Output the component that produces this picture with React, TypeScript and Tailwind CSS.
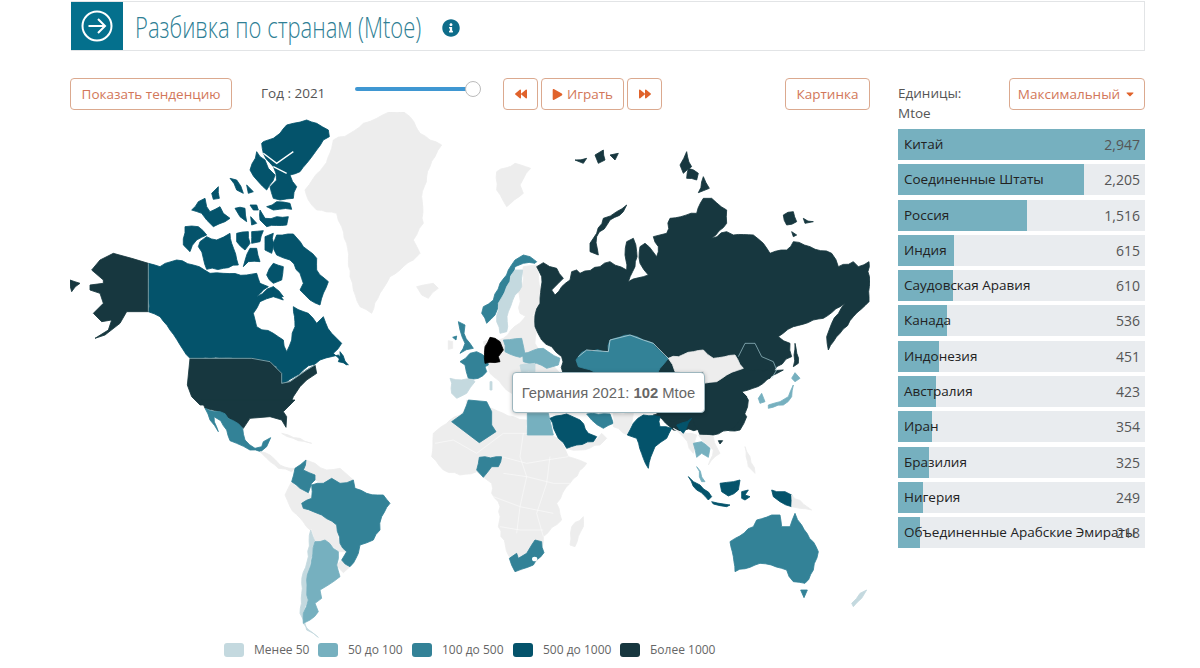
import React from "react";
import { FaBackward, FaForward, FaPlay, FaInfoCircle, FaCaretDown } from "react-icons/fa";

const DARK = "#17373f";
const D500 = "#04536b";
const D100 = "#338297";
const D50 = "#76b0bf";
const LOW = "#c4d9df";
const NONE = "#ededed";

type Shape = [string, string, boolean?];

// adds small deterministic coast detail to the long straight edges of a drawn outline
let seed = 12345;
const rnd = () => {
  seed = (seed * 1103515245 + 12345) & 0x7fffffff;
  return seed / 0x7fffffff;
};
const rough = (s: string, amp = 3.5, seg = 15) => {
  const p = s.split(" ").map((q) => q.split(",").map(Number));
  const out: string[] = [];
  p.forEach((a, i) => {
    const b = p[(i + 1) % p.length];
    out.push(`${a[0]},${a[1]}`);
    const dx = b[0] - a[0];
    const dy = b[1] - a[1];
    const len = Math.hypot(dx, dy);
    const n = Math.floor(len / seg);
    for (let k = 1; k < n; k++) {
      const t = k / n;
      const o = (rnd() - 0.5) * 2 * amp;
      out.push(`${(a[0] + dx * t - (dy / len) * o).toFixed(1)},${(a[1] + dy * t + (dx / len) * o).toFixed(1)}`);
    }
  });
  return out.join(" ");
};

const P = ({ c, pts, straight }: { c: string; pts: string; straight?: boolean }) => {
  const d = React.useMemo(() => (straight ? pts : rough(pts)), [pts, straight]);
  return <polygon points={d} fill={c} stroke={c} strokeWidth={2.5} strokeLinejoin="round" />;
};

// coordinates read from 3x crops; each group maps its crop back on to the page
const z5: Shape[] = [
  [NONE, "735,240 760,205 790,170 815,115 820,90 870,70 910,40 950,25 990,5 1030,5 1050,20 1080,70 1110,90 1145,105 1125,140 1110,170 1100,200 1085,260 1090,340 1060,390 1080,430 1060,450 1030,470 990,500 960,550 935,610 900,590 880,540 870,500 860,400 845,350 830,310 770,300 745,270"],
  [NONE, "1070,530 1120,520 1135,535 1105,565 1085,555"],
  [D500, "265,460 300,470 350,450 400,465 450,490 490,490 560,495 590,490 600,520 625,530 590,560 640,530 670,570 640,560 600,575 580,610 590,650 640,670 670,690 680,725 695,690 705,650 700,590 745,610 770,640 790,620 815,670 845,700 820,730 860,765 835,735 780,750 730,780 680,815 660,820 650,770 575,745 390,745 370,720 330,660 300,620 265,605"],
  [D500, "650,375 700,372 730,410 770,445 770,480 805,515 780,585 750,570 720,540 730,520 720,490 690,450 650,435 640,400"],
  [D500, "640,460 670,470 665,510 640,520 620,495"],
  [D500, "640,530 670,560 640,555"],
  [D500, "420,395 440,380 470,390 510,370 515,400 535,465 490,475 440,478 430,445 415,410"],
  [D500, "375,350 415,350 440,375 410,390 390,425 370,405"],
  [D500, "530,370 565,365 570,400 555,420 530,395"],
  [D500, "575,365 610,362 600,395 575,400"],
  [D500, "570,415 590,415 600,455 565,455 550,470"],
  [D500, "615,380 640,370 635,430 615,420"],
  [D500, "610,95 640,85 660,70 680,45 700,40 740,30 770,40 805,60 808,80 790,90 770,120 740,160 720,185 690,195 710,230 700,265 660,270 640,265 630,230 650,210 640,170 610,130 605,100"],
  [D500, "570,180 590,125 615,150 625,175 645,195 620,240 595,215"],
  [D500, "620,290 650,275 690,280 695,298 640,300"],
  [D500, "600,300 615,325 650,320 685,320 680,345 620,350 600,330"],
  [D500, "395,300 415,275 435,265 440,290 450,305 480,290 490,310 510,325 495,335 460,350 440,330 425,310"],
  [D500, "510,205 530,210 550,250 530,240"],
  [D500, "560,225 580,245 565,250"],
  [D500, "455,250 475,230 478,265 460,268"],
  [D500, "570,285 590,285 595,300 580,300"],
  [D500, "525,295 555,295 560,335 540,320"],
  [D500, "572,320 590,340 575,345"],
  [D500, "840,725 865,765 835,755"],
  [DARK, "265,460 215,445 160,430 120,450 95,480 130,510 130,520 90,525 90,540 120,550 130,580 100,610 125,635 155,630 145,660 105,685 135,675 180,640 200,605 265,605", true],
  [DARK, "30,510 60,520 35,545"],
  [DARK, "390,745 575,745 630,755 665,790 665,820 690,815 740,780 765,765 770,790 740,810 720,830 700,860 690,885 420,885 395,860 382,825", true],
];

const z7: Shape[] = [
  [DARK, "5,0 15,25 60,35 100,65 130,85 150,55 210,50 245,60 258,82 260,50 250,35 285,0", true],
  [D100, "15,25 60,35 100,62 128,85 135,120 165,145 185,140 190,125 212,113 200,140 182,155 150,150 110,130 90,122 80,90 62,62 42,50 55,95 30,60"],
  [NONE, "180,155 210,165 240,195 270,205 285,205 275,215 235,205 200,175"],
  [NONE, "245,100 300,115 335,130 295,122"],
  [NONE, "318,180 345,190 380,210 420,205 460,240 420,250 395,235 370,250 345,240 345,225 310,210"],
  [NONE, "275,245 300,265 325,278 335,295 305,310 310,325 340,335 365,345 330,390 270,320 255,285"],
  [NONE, "340,335 365,345 410,375 420,430 440,455 415,455 375,420 345,425 335,390"],
  [NONE, "425,480 450,500 430,518 410,495"],
  [D100, "318,180 285,205 275,245 300,265 325,278 335,250 345,240 345,225 310,210"],
  [D100, "335,255 370,250 395,235 420,250 460,240 465,265 500,280 550,285 570,310 545,350 540,390 520,420 480,435 475,460 450,500 425,480 440,455 420,430 410,375 365,345 340,335 310,325 305,310 335,295"],
  [LOW, "332,390 345,425 330,490 320,540 325,600 310,640 310,670 340,700 355,712 320,690 300,640 305,550 325,470"],
  [D50, "345,425 375,420 415,455 410,495 420,530 385,555 360,570 365,595 345,610 355,635 330,660 310,670 310,640 325,600 320,540 335,480"],
];

const z10: Shape[] = [
  [NONE, "90,60 40,100 35,170 70,210 120,225 170,215 215,250 215,280 240,320 235,380 265,465 285,515 340,495 370,455 370,410 425,360 410,310 450,250 500,190 445,170 420,120 395,105 320,100 320,60 280,50 250,40 215,25 140,0 130,35"],
  [NONE, "490,350 490,380 465,440 450,435 455,380"],
  [NONE, "440,145 470,135 520,125 545,100 560,115 540,135 480,150"],
  [D100, "145,0 200,5 215,35 215,75 228,95 178,128 95,65 130,40 140,15", true],
  [D100, "178,172 245,170 235,200 215,200 190,232 170,210"],
  [D100, "345,420 365,425 372,458 340,495 285,515 268,475 290,460 295,475 320,460 335,435"],
  [D50, "322,40 385,40 400,105 322,105", true],
  [D500, "390,55 440,42 480,60 505,100 530,110 520,125 470,135 440,145 415,115"],
  [D100, "500,42 570,42 580,70 550,85 515,60"],
];

const z9Back: Shape[] = [
  [NONE, "130,275 190,265 260,195 300,200 285,280 330,340 360,370 250,440 215,430 150,370 140,340"],
  [NONE, "250,50 290,45 295,70 305,170 270,205 240,190 235,120 248,100"],
  [NONE, "25,272 38,275 38,295 25,298"],
];

const z6: Shape[] = [
  [NONE, "170,125 225,100 272,115 240,165 250,190 200,230 170,180"],
  [DARK, "560,225 530,245 490,265 470,310 450,340 450,365 475,375 470,320 510,270 550,245"],
  [DARK, "405,90 440,85 430,100"],
  [DARK, "465,75 490,60 495,90 475,100"],
  [DARK, "510,75 535,70 525,90"],
  [DARK, "740,65 755,110 730,130 720,105"],
  [DARK, "745,115 775,130 770,150 740,145"],
  [DARK, "790,140 808,175 775,188"],
  [DARK, "1030,255 1060,245 1070,275 1040,285"],
  [DARK, "1090,265 1120,275 1095,280"],
  [DARK, "1055,305 1070,315 1060,320"],
  [DARK, "1065,640 1075,700 1060,710"],
  [DARK, "290,410 310,398 350,415 370,445 355,460 335,480 345,495 365,470 390,450 395,425 410,420 420,430 480,410 510,395 560,420 555,375 560,335 580,325 590,365 585,410 565,455 610,440 625,435 600,400 600,350 615,340 650,380 655,350 640,320 680,310 690,265 770,250 790,205 815,205 860,240 860,280 815,325 860,305 880,315 940,315 970,340 990,370 1040,360 1060,335 1110,350 1175,370 1195,410 1240,395 1255,410 1287,395 1287,515 1240,560 1200,610 1165,660 1160,620 1175,580 1215,520 1150,565 1060,590 1015,620 1050,640 1055,680 1010,710 990,745 925,770 900,780 920,800 905,830 920,860 900,900 700,900 600,800 370,760 365,680 335,650 305,630 285,590 285,555 300,520 305,440"],
  [D100, "415,680 440,660 505,665 510,630 570,615 610,630 640,640 685,685 660,715 650,735 500,735 415,710 408,690"],
];

const z9: Shape[] = [
  [D100, "290,35 270,20 250,15 225,30 205,60 180,100 160,150 130,170 125,190 140,220 165,195 175,160 200,110 225,50 250,40 285,40"],
  [LOW, "248,60 245,110 225,135 205,185 200,245 180,250 170,215 175,160 200,110 225,60"],
  [D100, "55,215 75,225 72,250 90,280 100,295 60,310 75,280 60,240"],
  [D100, "38,262 50,258 48,270"],
  [D100, "90,310 110,305 140,325 145,345 135,350 140,365 115,385 85,385 75,345 60,335"],
  ["#000000", "150,262 165,265 180,275 190,300 175,320 180,335 135,340 135,290"],
  [D50, "190,270 245,265 255,315 240,322 195,305"],
  [D50, "248,310 310,295 360,325 355,345 320,355 290,340 250,335"],
  [LOW, "240,345 285,340 285,365 245,370"],
  [LOW, "30,385 100,390 105,395 80,430 50,445 35,430"],
  [LOW, "150,395 156,395 156,420 150,420"],
];

const z8: Shape[] = [
  [NONE, "340,130 400,130 382,195 340,170"],
  [DARK, "480,130 470,80 480,0 850,0 810,20 790,40 725,65 745,90 735,130 700,175 640,195 600,195 580,150 575,140 540,145 520,155 460,135"],
  [NONE, "520,175 560,190 590,195 580,250 550,200"],
  [NONE, "595,195 640,200 660,250 625,285 640,240 610,215"],
  [NONE, "735,230 750,260 765,310 745,290"],
  [D500, "390,180 400,160 430,135 480,140 480,170 515,175 500,205 465,230 445,295 430,265 410,205 382,195"],
  [D500, "530,165 575,145 550,190"],
  [DARK, "655,212 668,212 660,222"],
  [D50, "580,220 605,215 630,235 625,262 605,250 590,262"],
  [D50, "590,290 615,335 605,335"],
  [D500, "565,320 600,345 635,380 625,390 590,360"],
  [D500, "635,395 690,405 680,410 640,402"],
  [D500, "660,340 700,335 720,330 715,360 685,378 665,365"],
  [D500, "725,365 745,360 735,375 750,380 735,390 725,385"],
  [D500, "815,360 830,365 855,365 875,375 875,410 840,395 820,380"],
  [NONE, "875,375 935,420 900,415 875,410"],
  [D100, "690,515 760,470 770,450 815,435 840,435 845,470 870,470 885,430 905,465 955,545 940,600 915,640 880,635 860,600 845,595 780,580 705,605 700,560"],
  [D100, "902,660 922,660 912,683"],
  [LOW, "1100,660 1085,685 1060,710 1055,700 1080,670"],
  [D50, "880,45 865,80 840,95 805,105 805,115 850,105 875,80"],
  [D50, "875,25 885,8 900,25 885,35"],
  [D50, "785,70 795,95 780,100 775,85"],
];

const z11: Shape[] = [
  [NONE, "25,115 100,95 130,90 160,115 225,105 250,145 200,165 170,185 130,190 130,155 45,155"],
];

const Group = ({ x, y, shapes, children }: { x: number; y: number; shapes: Shape[]; children?: React.ReactNode }) => (
  <g transform={`translate(${x} ${y}) scale(${1 / 3})`}>
    {shapes.map(([c, pts, straight], i) => (
      <P key={i} c={c} pts={pts} straight={straight} />
    ))}
    {children}
  </g>
);

const WorldMap = () => (
  <svg viewBox="70 112 800 528" className="block w-[800px] h-[528px]">
    <Group x={60} y={110} shapes={z5}>
      <polyline points="610,130 650,160 700,125" fill="none" stroke="#fff" strokeWidth={4} />
      <polyline points="640,170 680,190" fill="none" stroke="#fff" strokeWidth={4} />
      <polyline points="265,460 265,605" fill="none" stroke="#a6cdd6" strokeWidth={2} />
      <polyline points="390,745 575,745 630,755 665,790 665,820 690,815 740,780 765,765" fill="none" stroke="#a6cdd6" strokeWidth={2} />
    </Group>
    <Group x={440} y={250} shapes={z9Back} />
    <Group x={440} y={130} shapes={z6}>
      <polyline points="415,680 440,660 505,665 510,630 570,615 610,630 640,640 685,685" fill="none" stroke="#d6e6ea" strokeWidth={2} />
    </Group>
    <Group x={440} y={250} shapes={z9} />
    <Group x={200} y={400} shapes={z7} />
    <Group x={420} y={400} shapes={z10}>
      <g fill="none" stroke="#fff" strokeWidth={1.5}>
        <polyline points="45,130 100,120 170,160 250,100 320,100" />
        <polyline points="245,170 320,190 380,180 445,170" />
        <polyline points="250,220 320,230 400,250 450,250" />
        <polyline points="220,290 300,320 400,340" />
        <polyline points="240,380 300,390 370,390" />
        <polyline points="310,100 300,170 320,230 300,320 290,400" />
        <polyline points="390,170 380,250 350,340 370,410" />
      </g>
      <ellipse cx={344} cy={477} rx={8} ry={7} fill="#fff" />
    </Group>
    <Group x={500} y={370} shapes={z8} />
    <Group x={660} y={320} shapes={z11}>
      <polyline points="235,110 255,70 285,70 305,110 340,125 350,150 335,175" fill="none" stroke="#a6cdd6" strokeWidth={2} />
    </Group>
  </svg>
);

const bars: [string, string, number][] = [
  ["Китай", "2,947", 247],
  ["Соединенные Штаты", "2,205", 186],
  ["Россия", "1,516", 129],
  ["Индия", "615", 56],
  ["Саудовская Аравия", "610", 55],
  ["Канада", "536", 49],
  ["Индонезия", "451", 41],
  ["Австралия", "423", 38],
  ["Иран", "354", 34],
  ["Бразилия", "325", 31],
  ["Нигерия", "249", 25],
  ["Объединенные Арабские Эмираты", "218", 22],
];

const legend: [string, string, string][] = [
  ["bg-[#c4d9df]", "Менее 50", "w-[55px]"],
  ["bg-[#76b0bf]", "50 до 100", "w-[55px]"],
  ["bg-[#338297]", "100 до 500", "w-[62px]"],
  ["bg-[#04536b]", "500 до 1000", "w-[68px]"],
  ["bg-[#17373f]", "Более 1000", "w-[66px]"],
];

const btn =
  "h-[32px] flex items-center justify-center rounded-[4px] border border-[#dba98f] bg-white text-[13.5px] text-[#d2775a]";

export default function App() {
  return (
    <div className="relative w-[1200px] h-[668px] overflow-hidden bg-white font-['Open_Sans',sans-serif]">
      <header className="ml-[71px] mt-px w-[1074px] h-[50px] flex items-center border border-l-0 border-[#e2e4e6]">
        <div className="w-[52px] h-[48px] flex items-center justify-center bg-[#04708d]">
          <svg width="32" height="32" viewBox="0 0 32 32" fill="none" stroke="#fff" strokeWidth="2">
            <circle cx="16" cy="16" r="14.5" />
            <path d="M7.5 16H24M17 9l7 7-7 7" />
          </svg>
        </div>
        <h1 className="ml-[12px] mt-[1px] text-[30px] leading-none font-light text-[#2f7f95] whitespace-nowrap origin-left scale-x-[0.734] w-[288px]">
          Разбивка по странам (Mtoe)
        </h1>
        <FaInfoCircle className="ml-[19px] mt-[3px] text-[#0e6d8a]" size={18} />
      </header>

      <div className="flex mt-[27px] ml-[70px]">
        <main className="w-[800px] shrink-0">
          <div className="h-[34px] flex">
            <button className={`${btn} w-[162px]`}>Показать тенденцию</button>
            <span className="ml-[29px] w-[94px] mt-[5px] text-[13.5px] leading-5 text-[#555]">Год : 2021</span>
            <div className="relative w-[119px] h-[4px] mt-[9px] rounded-full bg-[#3f97d2]">
              <span className="absolute -right-[7px] -top-[6px] w-[16px] h-[16px] rounded-full bg-white border border-[#bbb]" />
            </div>
            <div className="ml-[29px] flex gap-[3px]">
              <button className={`${btn} w-[35px] text-[#e0622b]`}><FaBackward size={12} /></button>
              <button className={`${btn} w-[83px] gap-[4px]`}><FaPlay size={11} className="text-[#e0622b]" />Играть</button>
              <button className={`${btn} w-[35px] text-[#e0622b]`}><FaForward size={12} /></button>
            </div>
            <button className={`${btn} ml-[123px] w-[85px]`}>Картинка</button>
          </div>
          <WorldMap />
          <div className="h-[20px] ml-[154px] flex items-center gap-[9px] text-[12px] text-[#666]">
            {legend.map(([c, t, w]) => (
              <div key={t} className="flex items-center gap-[10px]">
                <span className={`w-[20px] h-[14px] rounded-[3px] ${c}`} />
                <span className={`${w} whitespace-nowrap`}>{t}</span>
              </div>
            ))}
          </div>
        </main>

        <aside className="ml-[28px] w-[247px]">
          <div className="flex justify-between h-[51px]">
            <div className="pt-[5px] text-[13.5px] leading-[20px] text-[#555]">
              Единицы:
              <br />
              Mtoe
            </div>
            <button className={`${btn} w-[136px] gap-[4px]`}>Максимальный<FaCaretDown size={12} className="text-[#e0622b]" /></button>
          </div>
          <div className="flex flex-col gap-[4.3px]">
            {bars.map(([name, val, w]) => (
              <div key={name} className="relative h-[31px] bg-[#e9ecef] text-[13.5px] leading-[31px]">
                <div className="absolute left-0 top-0 h-full bg-[#76b0bf]" style={{ width: w }} />
                <span className="absolute left-[6px] top-0 whitespace-nowrap text-[#222]">{name}</span>
                <span className="absolute right-[5px] top-0 text-[14px] text-[#555]">{val}</span>
              </div>
            ))}
          </div>
        </aside>
      </div>

      <div className="absolute left-[512px] top-[372px] w-[193px] h-[41px] pt-[2px] flex items-center justify-center rounded-[4px] border border-[#9db6be] bg-white shadow-[0_1px_4px_rgba(0,0,0,0.25)] text-[14.8px] text-[#666] font-['Liberation_Sans',sans-serif]">
        Германия 2021:&nbsp;<b>102</b>&nbsp;Mtoe
      </div>
    </div>
  );
}
